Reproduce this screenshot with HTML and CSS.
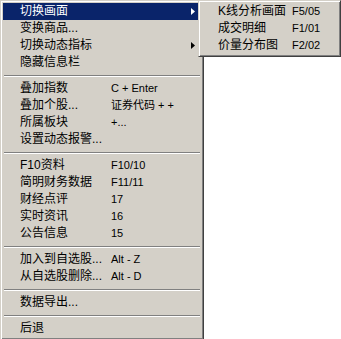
FILE: index.html
```html
<!DOCTYPE html>
<html>
<head>
<meta charset="utf-8">
<link rel="stylesheet" href="styles.css">
</head>
<body>
<div class="menu main">
  <div class="item active"><span class="label">切换画面</span><svg class="arrow" width="4" height="7" viewBox="0 0 4 7"><polygon points="0,0 4,3.5 0,7"/></svg></div>
  <div class="item"><span class="label">变换商品...</span></div>
  <div class="item"><span class="label">切换动态指标</span><svg class="arrow" width="4" height="7" viewBox="0 0 4 7"><polygon points="0,0 4,3.5 0,7"/></svg></div>
  <div class="item"><span class="label">隐藏信息栏</span></div>
  <div class="sep"></div>
  <div class="item"><span class="label">叠加指数</span><span class="key">C + Enter</span></div>
  <div class="item"><span class="label">叠加个股...</span><span class="key">证券代码 + +</span></div>
  <div class="item"><span class="label">所属板块</span><span class="key">+...</span></div>
  <div class="item"><span class="label">设置动态报警...</span></div>
  <div class="sep"></div>
  <div class="item"><span class="label">F10资料</span><span class="key">F10/10</span></div>
  <div class="item"><span class="label">简明财务数据</span><span class="key">F11/11</span></div>
  <div class="item"><span class="label">财经点评</span><span class="key">17</span></div>
  <div class="item"><span class="label">实时资讯</span><span class="key">16</span></div>
  <div class="item"><span class="label">公告信息</span><span class="key">15</span></div>
  <div class="sep"></div>
  <div class="item"><span class="label">加入到自选股...</span><span class="key">Alt - Z</span></div>
  <div class="item"><span class="label">从自选股删除...</span><span class="key">Alt - D</span></div>
  <div class="sep"></div>
  <div class="item"><span class="label">数据导出...</span></div>
  <div class="sep"></div>
  <div class="item"><span class="label">后退</span></div>
</div>
<div class="menu sub">
  <div class="item"><span class="label">K线分析画面</span><span class="key">F5/05</span></div>
  <div class="item"><span class="label">成交明细</span><span class="key">F1/01</span></div>
  <div class="item"><span class="label">价量分布图</span><span class="key">F2/02</span></div>
</div>
</body>
</html>
```
FILE: styles.css
```css
html, body {
  margin: 0;
  background: #ffffff;
}
body {
  width: 341px;
  height: 339px;
  overflow: hidden;
  position: relative;
  font-family: "Liberation Sans", "Noto Sans CJK SC", sans-serif;
  font-size: 12px;
  color: #000;
}
.menu {
  box-sizing: border-box;
  background: #d4d0c8;
  border: 1px solid;
  border-color: #d4d0c8 #404040 #404040 #d4d0c8;
  box-shadow: inset 1px 1px 0 #ffffff, inset -1px -1px 0 #808080;
  padding: 2px;
}
.main {
  width: 204px;
}
.sub {
  position: absolute;
  left: 198px;
  top: 0;
  width: 143px;
}
.item {
  position: relative;
  height: 17px;
  line-height: 17px;
  display: flex;
  align-items: center;
  padding-left: 17px;
  white-space: nowrap;
}
.item.active {
  background: #0a246a;
  color: #ffffff;
}
.main .label {
  width: 91px;
  flex: none;
}
.sub .label {
  width: 74px;
  flex: none;
}
.key {
  font-size: 11px;
}
.arrow {
  position: absolute;
  right: 6px;
  top: 5px;
  fill: #000;
}
.active .arrow {
  fill: #ffffff;
}
.sep {
  height: 9px;
  box-sizing: border-box;
  padding: 4px 1px 0;
}
.sep::before {
  content: "";
  display: block;
  border-top: 1px solid #808080;
  border-bottom: 1px solid #ffffff;
}
```
